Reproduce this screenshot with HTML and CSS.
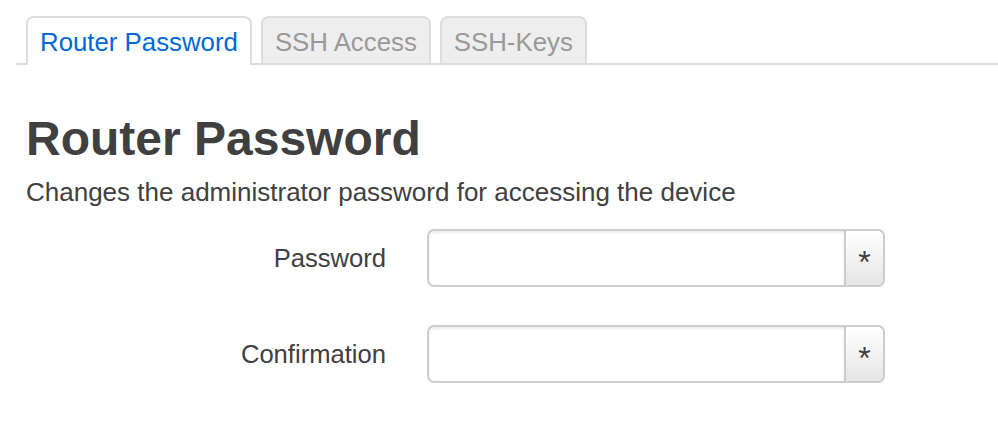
FILE: index.html
```html
<!DOCTYPE html>
<html>
<head>
<meta charset="utf-8">
<link rel="stylesheet" href="styles.css">
</head>
<body>
<div class="page">
  <ul class="tabs">
    <li class="tab active">Router Password</li>
    <li class="tab">SSH Access</li>
    <li class="tab">SSH-Keys</li>
  </ul>
  <div class="content">
    <h2 class="title">Router Password</h2>
    <p class="desc">Changes the administrator password for accessing the device</p>
    <div class="form">
      <div class="row">
        <label class="label">Password</label>
        <div class="field">
          <input class="input" type="password">
          <span class="addon">*</span>
        </div>
      </div>
      <div class="row">
        <label class="label">Confirmation</label>
        <div class="field">
          <input class="input" type="password">
          <span class="addon">*</span>
        </div>
      </div>
    </div>
  </div>
</div>
</body>
</html>
```
FILE: styles.css
```css
html, body {
  margin: 0;
  padding: 0;
  background: #fff;
}
body {
  font-family: "Liberation Sans", Arial, sans-serif;
  color: #404040;
}
.page {
  padding: 16px 0 0 16px;
}
.tabs {
  list-style: none;
  margin: 0;
  padding: 0 0 0 10px;
  display: flex;
  gap: 9px;
  border-bottom: 2px solid #ddd;
  height: 47px;
}
.tab {
  font-size: 25.8px;
  line-height: 48px;
  height: 47px;
  padding: 0 12px;
  border: 2px solid #ddd;
  border-bottom: none;
  border-radius: 8px 8px 0 0;
  background: #eee;
  color: #999;
  box-sizing: border-box;
}
.tab.active {
  background: #fff;
  color: #0069d6;
  height: 49px;
}
.content {
  padding-left: 10px;
}
.title {
  margin: 47px 0 0 0;
  font-size: 48px;
  line-height: 54px;
  font-weight: bold;
  color: #404040;
}
.desc {
  margin: 10px 0 0 0;
  font-size: 26px;
  line-height: 32px;
}
.form {
  margin-top: 21px;
  display: flex;
  flex-direction: column;
  gap: 38px;
}
.row {
  display: flex;
  align-items: center;
}
.label {
  width: 401px;
  text-align: right;
  font-size: 25.6px;
  padding-right: 41px;
  box-sizing: border-box;
}
.field {
  display: flex;
  height: 58px;
  width: 458px;
}
.input {
  flex: 1;
  min-width: 0;
  margin: 0;
  border: 2px solid #ccc;
  border-right: none;
  border-radius: 7px 0 0 7px;
  box-shadow: inset 0 2px 3px rgba(0,0,0,0.08);
  background: #fff;
  outline: none;
}
.addon {
  width: 41px;
  box-sizing: border-box;
  border: 2px solid #ccc;
  border-radius: 0 7px 7px 0;
  background: linear-gradient(#fff, #e6e6e6);
  display: flex;
  align-items: flex-start;
  justify-content: center;
  font-size: 32px;
  line-height: 1;
  color: #404040;
  padding-top: 15px;
}
```
